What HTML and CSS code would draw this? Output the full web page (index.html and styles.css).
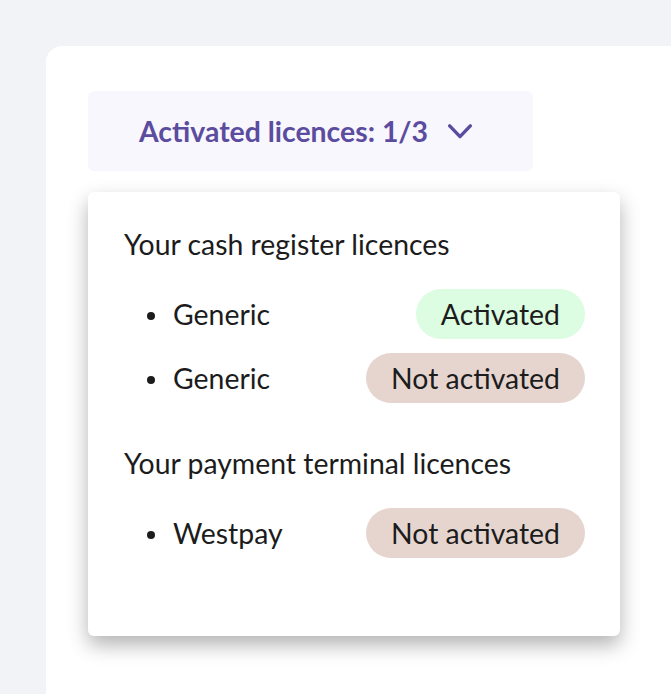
FILE: index.html
```html
<!DOCTYPE html>
<html>
<head>
<meta charset="utf-8">
<link rel="stylesheet" href="styles.css">
</head>
<body>
<div class="page">
  <div class="card">
    <button class="toggle">
      <span class="toggle-label">Activated licences: 1/3</span>
      <svg class="chevron" width="24" height="15" viewBox="0 0 24 15"><path d="M1.7 1.9 L12 12.6 L22.3 1.9" fill="none" stroke="#5b4c9f" stroke-width="3.4" stroke-linecap="round" stroke-linejoin="round"/></svg>
    </button>
    <div class="dropdown">
      <div class="group">
        <h3 class="group-title">Your cash register licences</h3>
        <ul class="list">
          <li class="item"><span class="name">Generic</span><span class="pill pill-on">Activated</span></li>
          <li class="item"><span class="name">Generic</span><span class="pill pill-off">Not activated</span></li>
        </ul>
      </div>
      <div class="group">
        <h3 class="group-title">Your payment terminal licences</h3>
        <ul class="list">
          <li class="item"><span class="name">Westpay</span><span class="pill pill-off">Not activated</span></li>
        </ul>
      </div>
    </div>
  </div>
</div>
</body>
</html>
```
FILE: styles.css
```css
* { box-sizing: border-box; }
html, body { margin: 0; padding: 0; }
body {
  background: #f2f3f7;
  font-family: Lato, "Open Sans", sans-serif;
  color: #1c1c1c;
  overflow: hidden;
}
.page {
  display: flex;
  height: 694px;
  padding: 46px 0 0 46px;
}
.card {
  flex: 1;
  background: #ffffff;
  border-radius: 16px 0 0 0;
  padding: 45px 0 0 42px;
}
.toggle {
  display: flex;
  align-items: center;
  justify-content: flex-start;
  gap: 20px;
  width: 445px;
  height: 80px;
  background: #f8f7fd;
  border: none;
  border-radius: 6px;
  padding: 0 0 0 51px;
  font-family: inherit;
  cursor: pointer;
}
.toggle-label {
  font-size: 28.4px;
  font-weight: 700;
  color: #5b4c9f;
  line-height: 34px;
}
.chevron { display: block; margin-top: 0; }
.dropdown {
  margin-top: 21px;
  width: 532px;
  background: #fff;
  border-radius: 6px;
  box-shadow: 0 9px 20px rgba(0,0,0,0.3);
  padding: 35px 35px 78px 36px;
}
.group-title {
  margin: 0;
  font-size: 28.4px;
  font-weight: 400;
  line-height: 34px;
}
.group + .group { margin-top: 43px; }
.list {
  list-style: none;
  margin: 0;
  padding: 0;
}
.item {
  display: flex;
  align-items: center;
  justify-content: space-between;
  height: 50px;
  margin-top: 14px;
  padding-left: 49px;
  position: relative;
  font-size: 28.4px;
}
.list .item:first-child { margin-top: 28px; }
.item::before {
  content: "";
  position: absolute;
  left: 23px;
  top: 23px;
  width: 8px;
  height: 8px;
  border-radius: 50%;
  background: #1c1c1c;
}
.pill {
  height: 50px;
  border-radius: 25px;
  padding: 0 25px;
  display: flex;
  align-items: center;
  font-size: 28.4px;
}
.pill-on { background: #dcfde1; }
.pill-off { background: #e6d5cf; }
```
